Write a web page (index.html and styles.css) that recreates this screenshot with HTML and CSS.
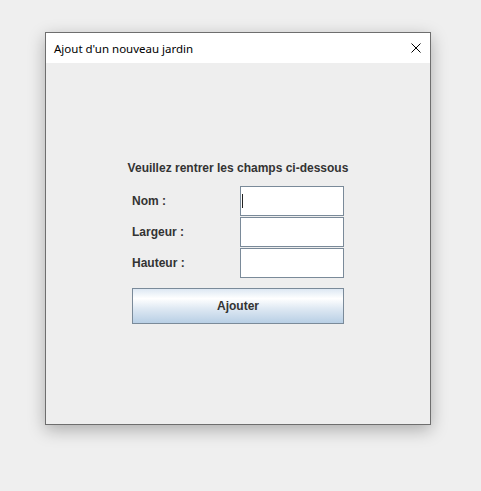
FILE: index.html
```html
<!DOCTYPE html>
<html lang="fr">
<head>
<meta charset="utf-8">
<title>Ajout d'un nouveau jardin</title>
<link rel="stylesheet" href="styles.css">
</head>
<body>
<div class="window">
  <div class="titlebar">
    <span class="title">Ajout d'un nouveau jardin</span>
    <svg class="close" width="10" height="10" viewBox="0 0 10 10"><path d="M0.5 0.5 L9.5 9.5 M9.5 0.5 L0.5 9.5" stroke="#000" stroke-width="1" fill="none"/></svg>
  </div>
  <div class="content">
    <div class="form">
      <div class="heading">Veuillez rentrer les champs ci-dessous</div>
      <div class="fields">
        <label class="label">Nom :</label>
        <div class="field"><span class="caret"></span></div>
        <label class="label">Largeur :</label>
        <div class="field"></div>
        <label class="label">Hauteur :</label>
        <div class="field"></div>
      </div>
      <div class="button">Ajouter</div>
    </div>
  </div>
</div>
</body>
</html>
```

FILE: styles.css
```css
html, body {
  margin: 0;
  padding: 0;
}
body {
  background: #efefef;
  width: 481px;
  height: 491px;
  overflow: hidden;
  padding-top: 32px;
  padding-left: 45px;
  box-sizing: border-box;
}
.window {
  width: 386px;
  height: 393px;
  box-sizing: border-box;
  border: 1px solid #6e6e6e;
  background: #eeeeee;
  box-shadow: 0 5px 16px rgba(0, 0, 0, 0.28);
  display: flex;
  flex-direction: column;
}
.titlebar {
  height: 30px;
  background: #ffffff;
  display: flex;
  align-items: center;
  justify-content: space-between;
  padding: 0 9px 0 8px;
}
.title {
  font-family: "Noto Sans", "Open Sans", sans-serif;
  font-size: 11.5px;
  color: #000;
}
.close {
  display: block;
}
.content {
  flex: 1;
  display: flex;
  justify-content: center;
  padding-top: 98px;
}
.form {
  width: 212px;
  display: flex;
  flex-direction: column;
  font-family: "Liberation Sans", Arial, sans-serif;
  font-weight: bold;
  font-size: 12px;
  color: #333333;
}
.heading {
  text-align: center;
  line-height: 15px;
  white-space: nowrap;
  margin: 0 -10px 10px;
}
.fields {
  display: grid;
  grid-template-columns: 108px 104px;
  row-gap: 1px;
}
.label {
  display: flex;
  align-items: center;
  height: 30px;
}
.field {
  height: 30px;
  box-sizing: border-box;
  background: #ffffff;
  border: 1px solid #7a8a99;
  box-shadow: inset -1px -1px 0 #ffffff;
  display: flex;
  align-items: center;
}
.caret {
  width: 1px;
  height: 14px;
  background: #222;
  margin-left: 1px;
}
.button {
  margin-top: 10px;
  height: 36px;
  box-sizing: border-box;
  border: 1px solid #7a8a99;
  background: linear-gradient(to bottom, #dde8f3 0%, #ffffff 28%, #dce7f2 60%, #b8cfe5 100%);
  display: flex;
  align-items: center;
  justify-content: center;
  font-size: 12px;
  color: #333333;
}
```
